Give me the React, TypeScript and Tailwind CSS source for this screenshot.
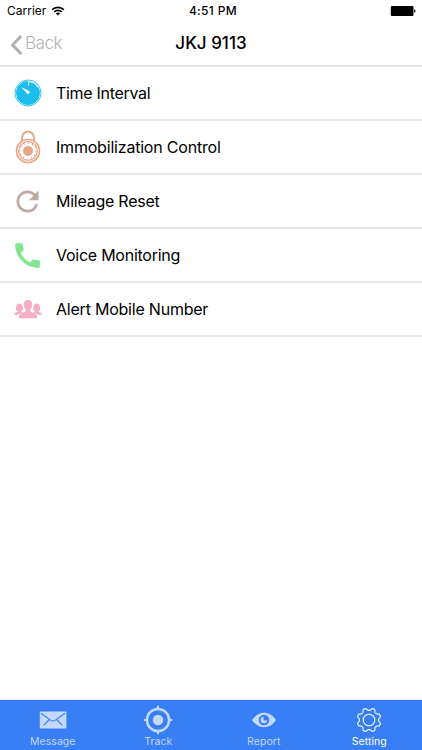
import { MdCall, MdRefresh } from "react-icons/md";

const FONT = "font-[Inter,'Liberation_Sans',sans-serif]";

function TimerIcon() {
  return (
    <svg viewBox="0 0 28 28" className="h-7 w-7" fill="none">
      <circle cx="14" cy="14" r="13" stroke="#1cbdec" strokeWidth="0.9" />
      <circle cx="14" cy="14" r="11.9" fill="#1cbdec" />
      <path d="M14.600 6.800V2.500a11.500 11.500 0 0 1 9.500 6" stroke="#fff" strokeWidth="1" />
      <path d="M7.200 8l8.200 4.200a1.700 1.700 0 0 1-2.200 2.500z" fill="#fff" />
    </svg>
  );
}

function LockIcon() {
  return (
    <svg viewBox="0 0 26 34" className="h-[34px] w-[26px]" fill="none" stroke="#e8a888">
      <path d="M7 11.5V8a6 6.400 0 0 1 12 0v3.500" strokeWidth="2" />
      <circle cx="13" cy="21" r="11.500" strokeWidth="1.700" />
      <circle cx="13" cy="21" r="9.300" strokeWidth="1.300" />
      <circle cx="13" cy="21" r="7.700" strokeWidth="1.500" strokeDasharray="0.8 3.230" />
      <circle cx="13" cy="21" r="5" fill="#e8a888" stroke="none" />
    </svg>
  );
}

function PeopleIcon() {
  return (
    <svg viewBox="0 0 28 20" className="h-5 w-7" fill="#f5afc4">
      <path d="M14 1c2.900 0 4.400 1.900 4.300 4.500-.1 2.300-.9 3.800-1.900 4.900v1.800c.5 1.400 5.900 1.500 6.500 4.500l.2 2.500H4.900l.2-2.500c.6-3 6-3.100 6.500-4.500v-1.800c-1-1.100-1.800-2.600-1.900-4.900C9.600 2.900 11.100 1 14 1z" />
      <path d="M5.300 4.500c2.100 0 3.200 1.300 3.200 3.200 0 1.300.2 2.300.8 3.200-.6.600-1.400.7-2.100.7v.8c.3.600 1.400.8 2.400 1.100-2.500.7-3.900 1.200-4.800 2.200H.1c.1-2.400 2.600-2.300 3.500-3.200v-.9c-.8 0-1.600-.1-2.200-.7.6-1 .8-1.900.8-3.200 0-1.900 1-3.200 3.100-3.200z" />
      <path d="M22.700 4.500c-2.100 0-3.200 1.300-3.200 3.200 0 1.300-.2 2.300-.8 3.200.6.600 1.400.7 2.100.7v.8c-.3.600-1.400.8-2.400 1.100 2.500.7 3.900 1.200 4.800 2.200h4.700c-.1-2.400-2.600-2.300-3.500-3.200v-.9c.8 0 1.600-.1 2.200-.7-.6-1-.8-1.900-.8-3.200 0-1.900-1-3.200-3.100-3.200z" />
    </svg>
  );
}

function MessageIcon() {
  return (
    <svg viewBox="0 0 28 18" className="h-[18px] w-7">
      <rect x="0.800" y="0.600" width="26.600" height="16.800" rx="1" fill="currentColor" />
      <path
        d="M2 2.200l9.500 6.900c1.800 1.300 3.200 1.300 5 0L26 2.200M4.500 14.300l5.900-5.800M23.500 14.300l-5.900-5.800"
        fill="none"
        stroke="#387ef5"
        strokeWidth="1.100"
      />
    </svg>
  );
}

function TrackIcon() {
  return (
    <svg viewBox="0 0 30 30" className="h-[30px] w-[30px]" fill="none" stroke="currentColor">
      <circle cx="15" cy="15" r="11.100" strokeWidth="2.500" />
      <circle cx="15" cy="15" r="5.300" fill="currentColor" stroke="none" />
      <path d="M15 .8v4M15 25.200v4M.8 15h4M25.200 15h4" strokeWidth="2.200" />
    </svg>
  );
}

function ReportIcon() {
  return (
    <svg viewBox="0 0 26 16" className="h-4 w-[26px]">
      <path d="M1 8C4.500 3.200 8.200.8 13 .8S21.500 3.200 25 8c-3.500 4.800-7.200 7.200-12 7.200S4.500 12.800 1 8z" fill="currentColor" />
      <circle cx="13" cy="8" r="5.300" fill="#387ef5" />
      <path d="M13 4.700a3.300 3.300 0 1 0 3.300 3.300 1.700 1.700 0 0 1-3.300-3.300z" fill="currentColor" />
    </svg>
  );
}

// Outline of an eight tooth gear centred on 14,14
const gearPath =
  Array.from({ length: 144 }, (_, i) => {
    const a = (i / 144) * Math.PI * 2;
    const r = 10.8 - 1.2 * Math.tanh(2 * Math.cos(8 * a));
    return `${i ? "L" : "M"}${(14 + r * Math.cos(a)).toFixed(2)} ${(14 + r * Math.sin(a)).toFixed(2)}`;
  }).join("") + "Z";

function SettingIcon() {
  return (
    <svg viewBox="0 0 28 28" className="h-7 w-7" fill="none" stroke="currentColor" strokeWidth="1.100">
      <path d={gearPath} strokeLinejoin="round" />
      <circle cx="14" cy="14" r="5.800" />
    </svg>
  );
}

const rows = [
  { label: "Time Interval", icon: <TimerIcon />, tracking: "tracking-[-0.3px]" },
  { label: "Immobilization Control", icon: <LockIcon />, tracking: "tracking-[-0.2px]" },
  { label: "Mileage Reset", icon: <MdRefresh className="h-[33px] w-[33px] text-[#c0aaa2]" />, tracking: "tracking-[-0.25px]" },
  { label: "Voice Monitoring", icon: <MdCall className="h-[33px] w-[33px] text-[#83e58f]" />, tracking: "tracking-[-0.25px]" },
  { label: "Alert Mobile Number", icon: <PeopleIcon />, tracking: "tracking-[-0.22px]" },
];

const tabs = [
  { label: "Message", icon: <MessageIcon /> },
  { label: "Track", icon: <TrackIcon /> },
  { label: "Report", icon: <ReportIcon /> },
  { label: "Setting", icon: <SettingIcon />, active: true },
];

function StatusBar() {
  return (
    <div className="grid h-[22px] grid-cols-3 items-center pl-[7px] pr-[6px] text-[12px]">
      <div className="flex items-center gap-[5px]">
        <span>Carrier</span>
        <svg viewBox="0 0 14 10" className="h-[10px] w-[14px]" fill="none" stroke="#000" strokeWidth="1.700">
          <path d="M1.200 3.700a8.200 8.200 0 0 1 11.600 0M3.300 6a5.200 5.200 0 0 1 7.400 0" />
          <path d="M7 9.600L4.900 7.500a3 3 0 0 1 4.200 0z" fill="#000" stroke="none" />
        </svg>
      </div>
      <span className="pl-[3px] text-center font-medium tracking-[0.350px]">4:51 PM</span>
      <svg viewBox="0 0 26 10" className="h-[10px] w-[26px] justify-self-end">
        <rect x="0.800" y="0" width="22.700" height="10" rx="1" />
        <path d="M24.200 3.200c1.800.4 1.800 3.200 0 3.600z" />
      </svg>
    </div>
  );
}

export default function App() {
  return (
    <div className={`flex h-[750px] w-[422px] flex-col overflow-hidden bg-white text-black ${FONT}`}>
      <StatusBar />
      <header className="grid h-[45px] grid-cols-[1fr_auto_1fr] items-center border-b-2 border-[#e2e2e2]">
        <button className="flex items-center gap-[2px] pl-[10px] text-[#b2b2b2]">
          <svg viewBox="0 0 13 20" className="mt-[3px] h-5 w-[13px]" fill="none" stroke="currentColor" strokeWidth="3">
            <path d="M11.200 1L2.600 10l8.600 9" />
          </svg>
          <span className="text-[17px] font-light tracking-[-0.450px]">Back</span>
        </button>
        <h1 className="text-[17px] font-medium">JKJ 9113</h1>
        <span />
      </header>

      <main className="flex-1">
        {rows.map((row) => (
          <div key={row.label} className="flex h-[54px] items-center border-b-2 border-[#e6e6e6]">
            <div className="mr-px flex w-[55px] shrink-0 justify-center">{row.icon}</div>
            <span className={`text-[16px] ${row.tracking}`}>{row.label}</span>
          </div>
        ))}
      </main>

      <nav className="grid h-[50px] grid-cols-4 border-t border-[#2b6fdc] bg-[#387ef5] text-white">
        {tabs.map((tab) => (
          <button key={tab.label} className={`flex flex-col items-center ${tab.active ? "" : "text-[#c3d8fc]"}`}>
            <span className="flex h-[38px] items-center">{tab.icon}</span>
            <span className="-mt-[3px] text-[10.500px] leading-[12px] tracking-[0.050px]">{tab.label}</span>
          </button>
        ))}
      </nav>
    </div>
  );
}
